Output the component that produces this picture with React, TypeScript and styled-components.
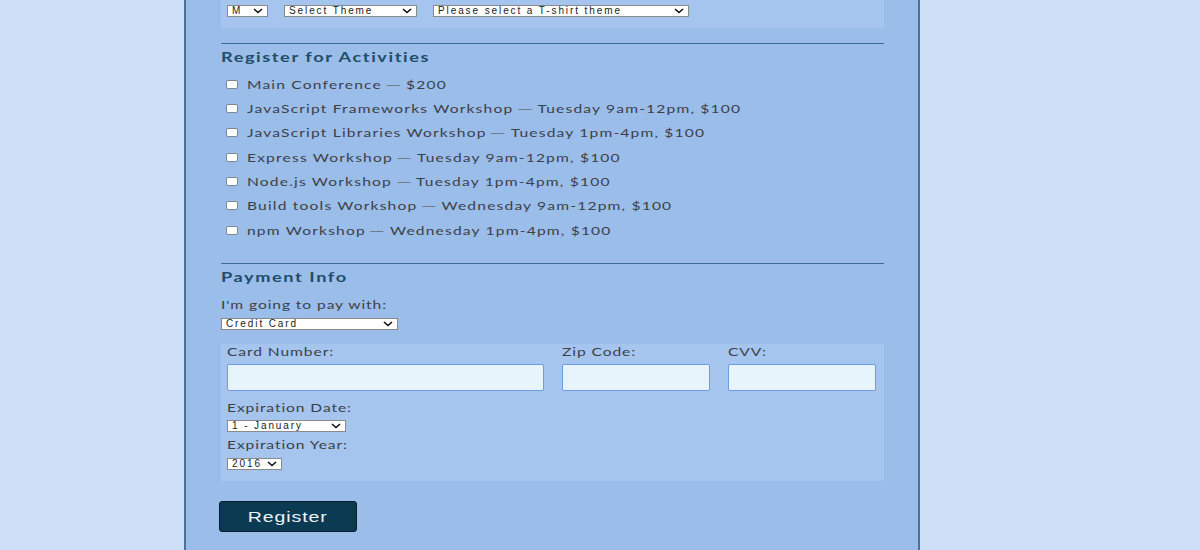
import React from "react";
import styled, { createGlobalStyle } from "styled-components";

const GlobalStyle = createGlobalStyle`
  html, body { margin: 0; padding: 0; }
  body {
    background: #cde0f8;
    font-family: Lato, "Open Sans", sans-serif;
    overflow: hidden;
  }
`;

const chevron =
  "url(\"data:image/svg+xml;utf8,<svg xmlns='http://www.w3.org/2000/svg' width='10' height='6' viewBox='0 0 10 6'><path d='M1 1 L5 4.5 L9 1' fill='none' stroke='%23111' stroke-width='1.6'/></svg>\")";

const Page = styled.div`
  height: 550px;
  overflow: hidden;
`;

const Container = styled.main`
  box-sizing: border-box;
  width: 736px;
  margin-left: 184px;
  min-height: 550px;
  background: #9bbdea;
  border-left: 2px solid #4f7297;
  border-right: 2px solid #4f7297;
  padding: 0 34px 0 35px;
`;

const ShirtBox = styled.div`
  background: #a5c4ee;
  height: 28px;
  box-sizing: border-box;
  padding: 5px 6px 0;
  display: flex;
  gap: 16px;
  align-items: flex-start;
`;

const Select = styled.select<{ $w: number }>`
  appearance: none;
  -webkit-appearance: none;
  box-sizing: border-box;
  width: ${(p) => p.$w}px;
  height: 12px;
  padding: 0 14px 0 4px;
  margin: 0;
  border: 1px solid #8a8a8a;
  border-radius: 0;
  background: #fff ${chevron} no-repeat right 4px center;
  font-family: "Liberation Sans", Arial, sans-serif;
  font-size: 10px;
  line-height: 10px;
  letter-spacing: 1.9px;
  color: #222;
  display: block;
`;

const Rule = styled.hr<{ $top: number }>`
  border: 0;
  height: 1px;
  background: #3f6b94;
  margin: ${(p) => p.$top}px 0 0;
`;

/* text in the reference is drawn wide: stretch it horizontally from its left edge */
const Wide = styled.span`
  display: inline-block;
  transform: scaleX(1.3);
  transform-origin: left center;
  white-space: pre;
`;

const Heading = styled.h2`
  margin: 3px 0 0;
  font-size: 14px;
  line-height: 20px;
  font-weight: 700;
  letter-spacing: 1.2px;
  color: #204e68;
`;

const Activities = styled.div`
  margin-top: 5px;
  display: flex;
  flex-direction: column;
`;

const ActivityRow = styled.label`
  display: flex;
  align-items: center;
  height: 24.33px;
  font-size: 12px;
  letter-spacing: 0.9px;
  color: #3b4148;
`;

const Dash = styled.span`
  display: inline-block;
  color: #6f7c8a;
  letter-spacing: 0;
  transform: scaleX(1.25);
  margin: 0 5px 0 4px;
`;

const Check = styled.input`
  appearance: none;
  -webkit-appearance: none;
  flex: none;
  width: 12px;
  height: 9px;
  margin: 0 9px 0 5px;
  background: #fff;
  border: 1px solid #7d8790;
  border-radius: 2px;
  box-sizing: border-box;
`;

const Text = styled.div<{ $top: number }>`
  margin-top: ${(p) => p.$top}px;
  font-size: 12px;
  line-height: 16px;
  letter-spacing: 0.7px;
  color: #3b4148;
`;

const SelectWrap = styled.div<{ $top: number }>`
  margin-top: ${(p) => p.$top}px;
`;

const CardBox = styled.div`
  margin-top: 14px;
  background: #a5c4ee;
  padding: 0 8px 11px 6px;
`;

const CardGrid = styled.div`
  display: grid;
  grid-template-columns: 317px 148px 148px;
  column-gap: 18px;
`;

const Field = styled.div`
  display: flex;
  flex-direction: column;
`;

const Input = styled.input`
  box-sizing: border-box;
  margin-top: 4px;
  height: 27px;
  width: 100%;
  background: #e8f4fc;
  border: 1.5px solid #6b9de2;
  border-radius: 2px;
  outline: none;
`;

const Button = styled.button`
  display: block;
  margin: 20px 0 0 -2px;
  width: 138px;
  height: 31px;
  padding: 0;
  background: #0b3b53;
  border: 1.5px solid #05202e;
  border-radius: 3px;
  color: #eef2f5;
  font-family: "Liberation Sans", Arial, sans-serif;
  font-size: 15px;
  letter-spacing: 0.7px;
  cursor: pointer;
`;

const ButtonLabel = styled.span`
  display: inline-block;
  transform: scaleX(1.3);
`;

const activities: [string, string][] = [
  ["Main Conference", "$200"],
  ["JavaScript Frameworks Workshop", "Tuesday 9am-12pm, $100"],
  ["JavaScript Libraries Workshop", "Tuesday 1pm-4pm, $100"],
  ["Express Workshop", "Tuesday 9am-12pm, $100"],
  ["Node.js Workshop", "Tuesday 1pm-4pm, $100"],
  ["Build tools Workshop", "Wednesday 9am-12pm, $100"],
  ["npm Workshop", "Wednesday 1pm-4pm, $100"],
];

export default function App() {
  return (
    <Page>
      <GlobalStyle />
      <Container>
        <ShirtBox>
          <Select $w={41} defaultValue="M">
            <option>M</option>
          </Select>
          <Select $w={133}>
            <option>Select Theme</option>
          </Select>
          <Select $w={256}>
            <option>Please select a T-shirt theme</option>
          </Select>
        </ShirtBox>
        <Rule $top={15} />
        <Heading>
          <Wide>Register for Activities</Wide>
        </Heading>
        <Activities>
          {activities.map(([name, when]) => (
            <ActivityRow key={name}>
              <Check type="checkbox" />
              <Wide>
                {name}
                <Dash>—</Dash>
                {when}
              </Wide>
            </ActivityRow>
          ))}
        </Activities>
        <Rule $top={21} />
        <Heading>
          <Wide>Payment Info</Wide>
        </Heading>
        <Text $top={10}>
          <Wide>I'm going to pay with:</Wide>
        </Text>
        <SelectWrap $top={5}>
          <Select $w={177}>
            <option>Credit Card</option>
          </Select>
        </SelectWrap>
        <CardBox>
          <CardGrid>
            <Field>
              <Text $top={0}>
                <Wide>Card Number:</Wide>
              </Text>
              <Input type="text" />
            </Field>
            <Field>
              <Text $top={0}>
                <Wide>Zip Code:</Wide>
              </Text>
              <Input type="text" />
            </Field>
            <Field>
              <Text $top={0}>
                <Wide>CVV:</Wide>
              </Text>
              <Input type="text" />
            </Field>
          </CardGrid>
          <Text $top={9}>
            <Wide>Expiration Date:</Wide>
          </Text>
          <SelectWrap $top={4}>
            <Select $w={119}>
              <option>1 - January</option>
            </Select>
          </SelectWrap>
          <Text $top={5}>
            <Wide>Expiration Year:</Wide>
          </Text>
          <SelectWrap $top={5}>
            <Select $w={55}>
              <option>2016</option>
            </Select>
          </SelectWrap>
        </CardBox>
        <Button type="submit">
          <ButtonLabel>Register</ButtonLabel>
        </Button>
      </Container>
    </Page>
  );
}
